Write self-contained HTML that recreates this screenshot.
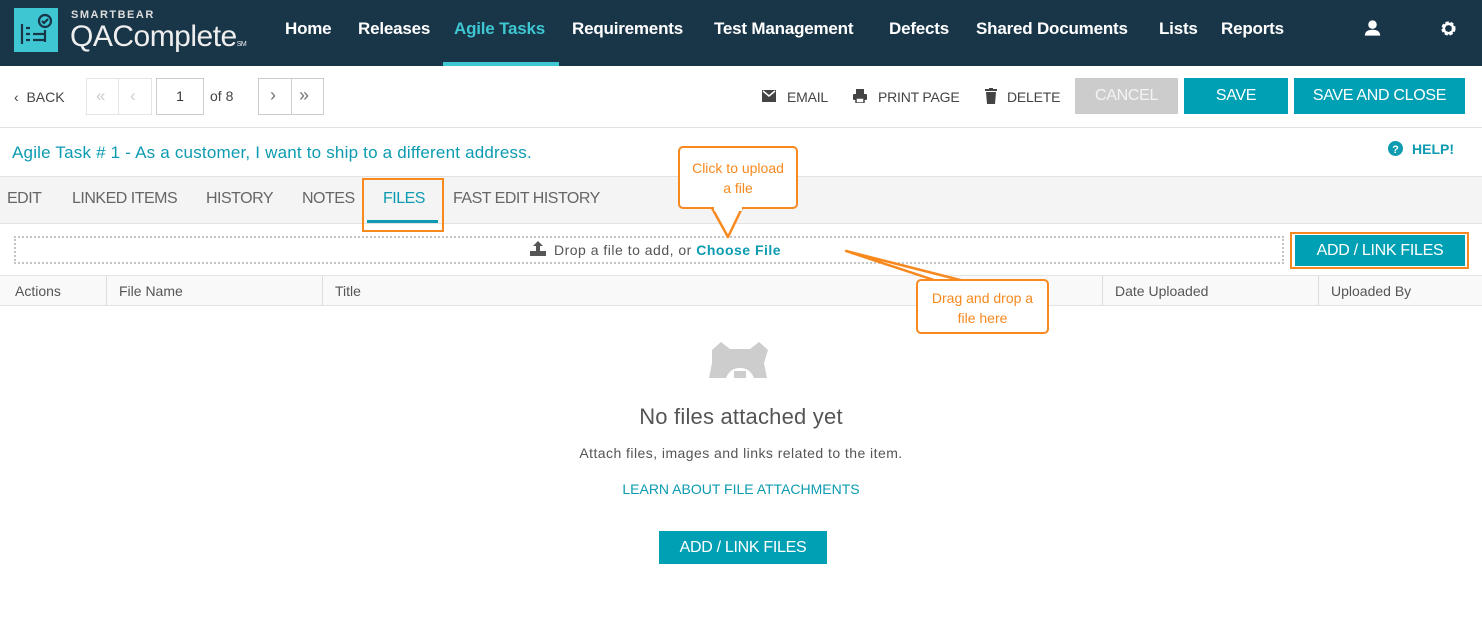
<!DOCTYPE html>
<html><head><meta charset="utf-8"><style>
*{box-sizing:border-box;margin:0;padding:0}
body{width:1482px;height:622px;position:relative;background:#fff;font-family:"Liberation Sans",sans-serif;overflow:hidden;color:#555}
.a{position:absolute;white-space:nowrap}
.nav{color:#fff;font-weight:bold;font-size:17px;top:19px;letter-spacing:-0.2px}
.tb{font-size:14px;color:#444;top:89px;letter-spacing:-0.2px}
.btn{position:absolute;top:78px;height:36px;background:#00a0b4;color:#fff;font-size:16px;text-align:center;line-height:36px;letter-spacing:-0.3px}
.pg{position:absolute;top:78px;height:37px;border:1px solid #ccc;background:#fff}
.tab{font-size:16px;color:#666;top:190px;letter-spacing:-0.5px}
.th{font-size:14px;color:#555;top:283px}
.col{position:absolute;top:276px;height:30px;width:1px;background:#ddd}
.call{position:absolute;border:2.5px solid #f7891f;border-radius:5px;background:#fff;color:#f7891f;font-size:14px;text-align:center;line-height:20px}
</style></head><body>
<div class="a" style="left:0;top:0;width:1482px;height:66px;background:#193548"></div>
<svg class="a" style="left:14px;top:8px" width="44" height="44" viewBox="0 0 44 44"><rect width="44" height="44" fill="#3ec6d2"/><g fill="none" stroke="#193548" stroke-width="2.2"><path d="M8 16v20M12 20h4M12 26h4M12 32h4M19 26h12M19 32h12M31 22v12"/><circle cx="31" cy="13" r="6"/><path d="M28 13l2 2 4-4"/></g></svg>
<div class="a" style="left:71px;top:9px;color:#ddd;font-size:11px;font-weight:bold;letter-spacing:1.5px">SMARTBEAR</div>
<div class="a" style="left:70px;top:20px;color:#eee;font-size:30px;letter-spacing:-0.5px">QAComplete<span style="font-size:7px">SM</span></div>
<div class="a nav" style="left:285px">Home</div>
<div class="a nav" style="left:358px">Releases</div>
<div class="a nav" style="left:454px;color:#3ec6d2">Agile Tasks</div>
<div class="a" style="left:443px;top:62px;width:116px;height:4px;background:#3ec6d2"></div>
<div class="a nav" style="left:572px">Requirements</div>
<div class="a nav" style="left:714px">Test Management</div>
<div class="a nav" style="left:889px">Defects</div>
<div class="a nav" style="left:976px">Shared Documents</div>
<div class="a nav" style="left:1159px">Lists</div>
<div class="a nav" style="left:1221px">Reports</div>
<svg class="a" style="left:1364px;top:19px" width="17" height="18" viewBox="0 0 20 20" fill="#fff"><circle cx="10" cy="6" r="5"/><path d="M1 19q0-7 9-7t9 7z"/></svg>
<svg class="a" style="left:1440px;top:20px" width="17" height="17" viewBox="0 0 18 18"><circle cx="9" cy="9" r="5.5" fill="none" stroke="#fff" stroke-width="4" stroke-dasharray="3 1.6"/><circle cx="9" cy="9" r="5" fill="none" stroke="#fff" stroke-width="2.5"/></svg>

<div class="a" style="left:14px;top:89px;font-size:14px;color:#444">&#8249;&nbsp; BACK</div>
<div class="pg" style="left:86px;width:66px;border-color:#e4e4e4"></div>
<div class="a" style="left:118px;top:79px;width:1px;height:35px;background:#e4e4e4"></div>
<div class="a" style="left:96px;top:86px;color:#ccc;font-size:17px">«</div>
<div class="a" style="left:130px;top:86px;color:#ccc;font-size:17px">‹</div>
<div class="pg" style="left:156px;width:48px;text-align:center;line-height:35px;font-size:14px;color:#333">1</div>
<div class="a" style="left:210px;top:88px;font-size:14px;color:#444">of 8</div>
<div class="pg" style="left:258px;width:66px"></div>
<div class="a" style="left:291px;top:79px;width:1px;height:35px;background:#ccc"></div>
<div class="a" style="left:270px;top:85px;color:#777;font-size:18px">›</div>
<div class="a" style="left:299px;top:85px;color:#777;font-size:18px">»</div>

<svg class="a" style="left:762px;top:90px" width="14" height="12" viewBox="0 0 14 12"><rect width="14" height="12" fill="#444"/><path d="M1 1l6 5 6-5" fill="none" stroke="#fff" stroke-width="1.5"/></svg>
<div class="a tb" style="left:787px">EMAIL</div>
<svg class="a" style="left:853px;top:89px" width="14" height="14" viewBox="0 0 14 14" fill="#444"><rect x="3" y="0" width="8" height="5"/><rect x="0" y="5" width="14" height="6" rx="1"/><rect x="3" y="9" width="8" height="5" fill="#fff" stroke="#444" stroke-width="1.5"/></svg>
<div class="a tb" style="left:878px">PRINT PAGE</div>
<svg class="a" style="left:985px;top:88px" width="12" height="16" viewBox="0 0 12 16" fill="#444"><rect x="0" y="1" width="12" height="2"/><rect x="4" y="0" width="4" height="2"/><path d="M1 4h10l-1 12H2z"/></svg>
<div class="a tb" style="left:1007px">DELETE</div>
<div class="btn" style="left:1075px;width:103px;background:#ccc;color:#f4f4f4">CANCEL</div>
<div class="btn" style="left:1184px;width:104px">SAVE</div>
<div class="btn" style="left:1294px;width:171px">SAVE AND CLOSE</div>
<div class="a" style="left:0;top:127px;width:1482px;height:1px;background:#e2e2e2"></div>

<div class="a" style="left:12px;top:143px;font-size:17px;color:#0c9bb0;letter-spacing:0.2px">Agile Task # 1 - As a customer, I want to ship to a different address.</div>
<svg class="a" style="left:1388px;top:141px" width="15" height="15" viewBox="0 0 15 15"><circle cx="7.5" cy="7.5" r="7.5" fill="#0c9bb0"/><text x="7.5" y="12" font-size="11" font-weight="bold" fill="#fff" text-anchor="middle" font-family="Liberation Sans">?</text></svg>
<div class="a" style="left:1412px;top:141px;font-size:14px;font-weight:bold;color:#0c9bb0">HELP!</div>

<div class="a" style="left:0;top:176px;width:1482px;height:48px;background:#f4f4f4;border-top:1px solid #e2e2e2;border-bottom:1px solid #e2e2e2"></div>
<div class="a tab" style="left:7px">EDIT</div>
<div class="a tab" style="left:72px">LINKED ITEMS</div>
<div class="a tab" style="left:206px">HISTORY</div>
<div class="a tab" style="left:302px">NOTES</div>
<div class="a tab" style="left:383px;color:#0c9bb0">FILES</div>
<div class="a" style="left:367px;top:220px;width:71px;height:3px;background:#0c9bb0"></div>
<div class="a" style="left:362px;top:178px;width:82px;height:54px;border:2.5px solid #f7891f"></div>
<div class="a tab" style="left:453px">FAST EDIT HISTORY</div>

<div class="a" style="left:14px;top:236px;width:1270px;height:28px;border:2px dotted #c4c4c4"></div>
<svg class="a" style="left:530px;top:241px" width="16" height="15" viewBox="0 0 16 15" fill="#555"><path d="M8 0l5 5h-3v5H6V5H3z"/><rect x="0" y="10" width="16" height="5"/></svg>
<div class="a" style="left:554px;top:242px;font-size:14px;color:#555;letter-spacing:0.5px">Drop a file to add, or <b style="color:#0c9bb0">Choose File</b></div>
<div class="a" style="left:1290px;top:232px;width:179px;height:37px;border:2.5px solid #f7891f"></div>
<div class="btn" style="left:1295px;top:235px;width:170px;height:31px;line-height:31px">ADD / LINK FILES</div>

<div class="a" style="left:0;top:275px;width:1482px;height:31px;background:#f9f9f9;border-top:1px solid #e4e4e4;border-bottom:1px solid #e4e4e4"></div>
<div class="a th" style="left:15px">Actions</div>
<div class="col" style="left:106px"></div>
<div class="a th" style="left:119px">File Name</div>
<div class="col" style="left:322px"></div>
<div class="a th" style="left:335px">Title</div>
<div class="col" style="left:1102px"></div>
<div class="a th" style="left:1115px">Date Uploaded</div>
<div class="col" style="left:1318px"></div>
<div class="a th" style="left:1331px">Uploaded By</div>

<svg class="a" style="left:708px;top:341px" width="64" height="37" viewBox="0 0 64 37" fill="#cdcdcd"><path d="M4 9l9-8 9 7h20l9-7 9 8-4 13 3 15H46q-4-10-14-10t-14 10H1l3-15z"/><rect x="26" y="30" width="12" height="7"/></svg>
<div class="a" style="left:0;width:1482px;top:404px;text-align:center;font-size:22px;color:#555;letter-spacing:0.2px">No files attached yet</div>
<div class="a" style="left:0;width:1482px;top:445px;text-align:center;font-size:14px;color:#555;letter-spacing:0.45px">Attach files, images and links related to the item.</div>
<div class="a" style="left:0;width:1482px;top:481px;text-align:center;font-size:14px;color:#0c9bb0">LEARN ABOUT FILE ATTACHMENTS</div>
<div class="btn" style="left:659px;top:531px;width:168px;height:33px;line-height:33px">ADD / LINK FILES</div>

<svg class="a" style="left:0;top:0" width="1482" height="622" viewBox="0 0 1482 622"><path d="M712 208L728 237 742 208" fill="#fff" stroke="#f7891f" stroke-width="2.5" stroke-linejoin="round"/><path d="M846 251L940 282 968 282z" fill="#fff" stroke="#f7891f" stroke-width="2.5" stroke-linejoin="round"/></svg>
<div class="call" style="left:678px;top:146px;width:120px;height:63px;padding-top:10px">Click to upload<br>a file</div>
<div class="call" style="left:916px;top:279px;width:133px;height:55px;padding-top:7px">Drag and drop a<br>file here</div>
<svg class="a" style="left:712px;top:205px" width="32" height="6"><rect x="2" y="0" width="28" height="6" fill="#fff"/></svg>
</body></html>
